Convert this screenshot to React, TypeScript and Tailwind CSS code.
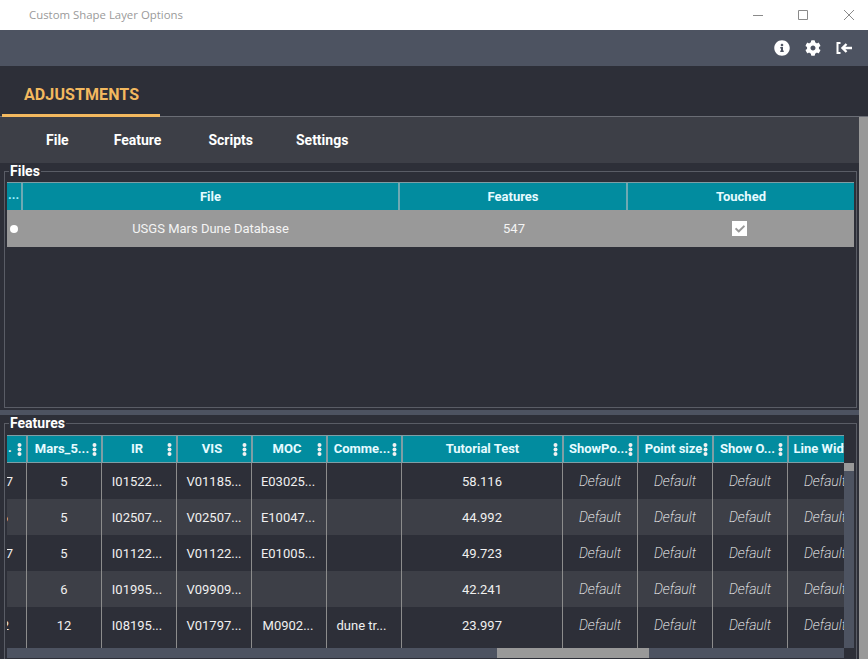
import React from 'react';
import { FaInfoCircle, FaCog, FaCheck } from 'react-icons/fa';

const Kebab = () => (
  <svg width="5" height="13" viewBox="0 0 5 13" className="absolute right-[4px] top-[7px]" fill="#f2f2f2">
    <circle cx="2.5" cy="2" r="2" />
    <circle cx="2.5" cy="6.5" r="2" />
    <circle cx="2.5" cy="11" r="2" />
  </svg>
);

const columns = [
  { label: 'Mars_5...', width: 'w-[75px]', pad: 'pr-[5px]' },
  { label: 'IR', width: 'w-[75px]', pad: 'pr-[5px]' },
  { label: 'VIS', width: 'w-[75px]', pad: 'pr-[5px]' },
  { label: 'MOC', width: 'w-[75px]', pad: 'pr-[5px]' },
  { label: 'Comme...', width: 'w-[75px]', pad: 'pr-[5px]' },
  { label: 'Tutorial Test', width: 'w-[161px]', pad: '' },
  { label: 'ShowPo...', width: 'w-[75px]', pad: 'pr-[4px]' },
  { label: 'Point size', width: 'w-[75px]', pad: 'pr-[4px]' },
  { label: 'Show O...', width: 'w-[75px]', pad: 'pr-[6px]' },
  { label: 'Line Width', width: 'w-[75px]', pad: 'pr-[2px]' },
];

// the text columns sit a little left of centre in the reference
const cellPads = ['', 'pr-[4px]', '', 'pr-[2px]', 'pr-[5px]', ''];

const rows = [
  { first: '7', firstPad: 'pr-[13px]', cells: ['5', 'I01522...', 'V01185...', 'E03025...', '', '58.116'] },
  { first: '6', firstPad: 'pr-[18px]', cells: ['5', 'I02507...', 'V02507...', 'E10047...', '', '44.992'] },
  { first: '7', firstPad: 'pr-[13px]', cells: ['5', 'I01122...', 'V01122...', 'E01005...', '', '49.723'] },
  { first: '', firstPad: '', cells: ['6', 'I01995...', 'V09909...', '', '', '42.241'] },
  { first: '2', firstPad: 'pr-[17px]', cells: ['12', 'I08195...', 'V01797...', 'M0902...', 'dune tr...', '23.997'] },
];

const App = () => {
  return (
    <div className="h-[659px] w-[868px] overflow-hidden flex flex-col bg-[#2d2f38] font-['Roboto',sans-serif] text-white">
      {/* window title */}
      <div className="h-[30px] shrink-0 bg-white flex items-center justify-between">
        <span className="ml-[29px] text-[11.4px] text-[#9a9a9a] font-['Open_Sans',sans-serif]">Custom Shape Layer Options</span>
        <div className="flex items-center mr-[14px] text-[#8a8a8a]">
          <svg width="10" height="10" viewBox="0 0 10 10" stroke="currentColor" fill="none" className="mr-[35px]"><path d="M0 5.5h10" /></svg>
          <svg width="10" height="10" viewBox="0 0 10 10" stroke="currentColor" fill="none" className="mr-[36px]"><path d="M.5.5h9v9h-9z" /></svg>
          <svg width="10" height="10" viewBox="0 0 10 10" stroke="currentColor" fill="none"><path d="M0 0l10 10M10 0L0 10" /></svg>
        </div>
      </div>

      {/* toolbar */}
      <div className="h-[36px] shrink-0 bg-[#4d5361] flex items-center justify-end gap-[15px] pr-[16px]">
        <FaInfoCircle size={16} />
        <FaCog size={16} />
        <svg width="16" height="14" viewBox="0 0 16 14" fill="none" stroke="white" strokeWidth="2">
          <path d="M4.5 2H1.5v10h3" />
          <path d="M16 7H7M10.5 3L6.5 7l4 4" strokeWidth="2.4" />
        </svg>
      </div>

      {/* tabs */}
      <div className="h-[51px] shrink-0 flex items-end border-b border-[#6a6d75] pl-[2px]">
        <div className="w-[158px] h-[50px] border-b-[3px] border-[#f3b95f] -mb-px flex items-center pl-[22px] pt-[8px]">
          <span className="text-[16px] font-bold text-[#f3b95f] tracking-[0.1px]">ADJUSTMENTS</span>
        </div>
      </div>

      <div className="flex-1 flex min-h-0">
        <div className="w-[859px] flex flex-col">
          {/* menu */}
          <div className="h-[46px] shrink-0 bg-[#3d3f47] flex items-center pl-[23px] text-[14px] font-bold">
            <span className="pl-[23px] pr-[22px]">File</span>
            <span className="pl-[23px] pr-[24px]">Feature</span>
            <span className="px-[23px]">Scripts</span>
            <span className="px-[20px]">Settings</span>
          </div>

          {/* files */}
          <div className="h-[247px] shrink-0">
            <fieldset className="ml-[4px] w-[853px] h-[245px] border border-[#5a5d66] pl-[2px] pr-[2px]">
              <legend className="ml-[2px] px-px text-[14px] leading-4 font-bold">Files</legend>
              <div className="mt-[3px] h-[28px] flex bg-[#028c9f] border-t border-[#7f9ea5] text-[13px] font-bold text-[#e6fbff]">
                <div className="w-[16px] border-r-2 border-[#6fa9b3] leading-[24px] pl-px text-[#9ff2ff]">...</div>
                <div className="w-[377px] border-r-2 border-[#6fa9b3] flex items-center justify-center">File</div>
                <div className="w-[228px] border-r-2 border-[#6fa9b3] flex items-center justify-center">Features</div>
                <div className="flex-1 flex items-center justify-center">Touched</div>
              </div>
              <div className="h-[37px] flex items-center bg-[#999999] text-[13px] text-[#f4f4f4]">
                <div className="w-[16px] flex pl-[3px]"><div className="w-[8px] h-[8px] rounded-full bg-white" /></div>
                <div className="w-[377px] text-center pt-px pr-[2px]">USGS Mars Dune Database</div>
                <div className="w-[228px] text-center pt-px">547</div>
                <div className="flex-1 flex justify-center">
                  <div className="w-[15px] h-[15px] mr-[3px] bg-white flex items-center justify-center">
                    <FaCheck size={10} className="text-[#999999]" />
                  </div>
                </div>
              </div>
            </fieldset>
          </div>

          {/* splitter */}
          <div className="h-[5px] shrink-0 bg-[#4d5361]" />

          {/* features */}
          <div className="flex-1 min-h-0">
            <fieldset className="ml-[4px] w-[853px] h-[250px] border border-[#5a5d66] pl-[2px] pr-[2px]">
              <legend className="ml-[2px] px-px text-[14px] leading-4 font-bold">Features</legend>
              <div className="mt-[4px] w-[837px] h-[28px] overflow-hidden flex bg-[#028c9f] border-y border-[#7f9ea5] text-[13px] font-bold text-[#e6fbff]">
                <div className="relative w-[21px] shrink-0 border-r-2 border-[#7f9ea5] leading-[24px] pl-px">
                  .
                  <Kebab />
                </div>
                {columns.map((col) => (
                  <div key={col.label} className={`relative ${col.width} shrink-0 border-r-2 border-[#7f9ea5] flex items-center justify-center whitespace-nowrap ${col.pad}`}>
                    {col.label}
                    <Kebab />
                  </div>
                ))}
              </div>

              <div className="flex h-[185px]">
                <div className="w-[837px] overflow-hidden">
                  {rows.map((row, i) => (
                    <div key={i} className={`h-[36px] flex items-center text-[13px] text-[#f0f0f0] ${i % 2 === 1 ? 'bg-[#3d3f47]' : 'bg-[#2d2f38]'}`}>
                      <div className={`w-[20px] h-full pt-px shrink-0 border-r border-[#8c8c8c] overflow-hidden flex items-center justify-end ${row.firstPad}`}>{row.first}</div>
                      {row.cells.map((cell, j) => (
                        <div key={j} className={`${j === 5 ? 'w-[161px]' : 'w-[75px]'} h-full pt-px shrink-0 border-r border-[#8c8c8c] flex items-center justify-center whitespace-nowrap ${cellPads[j]}`}>
                          {cell}
                        </div>
                      ))}
                      {[0, 1, 2, 3, 4].map((k) => (
                        <div key={k} className="w-[75px] h-full pt-px shrink-0 border-r border-[#8c8c8c] flex items-center justify-center italic font-extralight text-[14px] text-white">
                          Default
                        </div>
                      ))}
                    </div>
                  ))}
                  <div className="h-[5px] flex">
                    <div className="w-[20px] shrink-0 border-r border-[#8c8c8c]" />
                    {columns.map((col) => (
                      <div key={col.label} className={`${col.width} shrink-0 border-r border-[#8c8c8c]`} />
                    ))}
                  </div>
                </div>
                <div className="w-[10px] bg-[#4d5361]">
                  <div className="h-[8px] bg-[#999999]" />
                </div>
              </div>

              <div className="w-[837px] h-[10px] bg-[#4d5361]">
                <div className="ml-[490px] w-[152px] h-full bg-[#999999]" />
              </div>
            </fieldset>
          </div>
        </div>

        {/* page scrollbar */}
        <div className="w-[9px] bg-[#999999]" />
      </div>
    </div>
  );
};

export default App;
